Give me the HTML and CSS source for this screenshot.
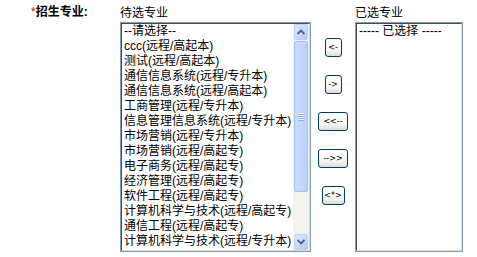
FILE: index.html
```html
<!DOCTYPE html>
<html>
<head>
<meta charset="utf-8">
<link rel="stylesheet" href="styles.css">
</head>
<body>
<div class="row">
  <div class="label"><span class="req">*</span>招生专业:</div>
  <div class="col col-left">
    <div class="caption">待选专业</div>
    <div class="listbox listbox-left">
      <ul class="options">
        <li>--请选择--</li>
        <li>ccc(远程/高起本)</li>
        <li>测试(远程/高起本)</li>
        <li>通信信息系统(远程/专升本)</li>
        <li>通信信息系统(远程/高起本)</li>
        <li>工商管理(远程/专升本)</li>
        <li>信息管理信息系统(远程/专升本)</li>
        <li>市场营销(远程/专升本)</li>
        <li>市场营销(远程/高起专)</li>
        <li>电子商务(远程/高起专)</li>
        <li>经济管理(远程/高起专)</li>
        <li>软件工程(远程/高起专)</li>
        <li>计算机科学与技术(远程/高起专)</li>
        <li>通信工程(远程/高起专)</li>
        <li>计算机科学与技术(远程/专升本)</li>
      </ul>
      <div class="scrollbar">
        <div class="sb-btn">
          <svg width="8" height="6" viewBox="0 0 8 6"><path d="M0.5 5 L4 1.5 L7.5 5" fill="none" stroke="#4d6185" stroke-width="1.8"/></svg>
        </div>
        <div class="sb-thumb">
          <div class="grip"></div>
          <div class="grip"></div>
          <div class="grip"></div>
          <div class="grip"></div>
        </div>
        <div class="sb-track"></div>
        <div class="sb-btn">
          <svg width="8" height="6" viewBox="0 0 8 6"><path d="M0.5 1 L4 4.5 L7.5 1" fill="none" stroke="#4d6185" stroke-width="1.8"/></svg>
        </div>
      </div>
    </div>
  </div>
  <div class="buttons">
    <button class="btn">&lt;-</button>
    <button class="btn">-&gt;</button>
    <button class="btn btn-wide">&lt;&lt;--</button>
    <button class="btn btn-wide">--&gt;&gt;</button>
    <button class="btn btn-mid">&lt;*&gt;</button>
  </div>
  <div class="col col-right">
    <div class="caption">已选专业</div>
    <div class="listbox listbox-right">
      <ul class="options">
        <li>----- 已选择 -----</li>
      </ul>
    </div>
  </div>
</div>
</body>
</html>
```

FILE: styles.css
```css
* { box-sizing: border-box; }
html, body {
  margin: 0;
  padding: 0;
  background: #fff;
}
body {
  font-family: "Liberation Sans", "Noto Sans CJK SC", sans-serif;
  font-size: 12px;
  color: #000;
}
.row {
  display: flex;
  align-items: flex-start;
}
.label {
  width: 120px;
  padding-left: 31px;
  padding-top: 4px;
  line-height: 17px;
  font-weight: bold;
}
.req {
  color: #ff0000;
  font-weight: normal;
}
.col {
  padding-top: 5px;
}
.col-left { width: 191px; }
.col-right { width: 108px; }
.caption {
  height: 17px;
  line-height: 17px;
}
.listbox {
  height: 230px;
  border: 1px solid #7f9db9;
  display: flex;
  position: relative;
}
.listbox::before {
  content: "";
  position: absolute;
  inset: 0;
  border-top: 1px solid #4a4a4a;
  border-left: 1px solid #4a4a4a;
  border-right: 1px solid #d6dfc9;
  border-bottom: 1px solid #d6dfc9;
  pointer-events: none;
}
.options {
  list-style: none;
  margin: 0;
  padding: 1px 0 0 3px;
  flex: 1;
  overflow: hidden;
}
.options li {
  height: 15px;
  line-height: 15px;
  white-space: nowrap;
}
.scrollbar {
  width: 16px;
  margin: 1px 1px 1px 0;
  background: #f4f3ee;
  display: flex;
  flex-direction: column;
  padding: 0 1px;
}
.sb-btn {
  height: 16px;
  border: 1px solid #bcd0f5;
  border-radius: 2px;
  background: linear-gradient(135deg, #e1eafe 0%, #c5d5fc 60%, #b5c8f7 100%);
  display: flex;
  align-items: center;
  justify-content: center;
}
.sb-thumb {
  height: 151px;
  margin-top: 1px;
  border: 1px solid #a9bff2;
  border-radius: 2px;
  background: linear-gradient(90deg, #c9dbfd 0%, #c4d8fd 50%, #b8cffb 100%);
  display: flex;
  flex-direction: column;
  align-items: center;
  justify-content: center;
  gap: 1px;
}
.grip {
  width: 6px;
  height: 1px;
  background: #eef4fe;
  box-shadow: 0 1px 0 #8cb0f8;
}
.sb-track {
  flex: 1;
}
.buttons {
  width: 44px;
  padding-top: 38px;
  display: flex;
  flex-direction: column;
  align-items: center;
  gap: 18px;
}
.btn {
  width: 17px;
  height: 19px;
  padding: 0;
  border: 1px solid #003c74;
  border-radius: 3px;
  background: linear-gradient(180deg, #ffffff 0%, #f4f4f0 70%, #dcdcd2 100%);
  font-family: "DejaVu Sans", sans-serif;
  font-size: 8px;
  color: #000;
  line-height: 17px;
  text-align: center;
}
.btn-wide { width: 30px; }
.btn-mid { width: 23px; }
.listbox-right .options { padding-left: 3px; }
```
